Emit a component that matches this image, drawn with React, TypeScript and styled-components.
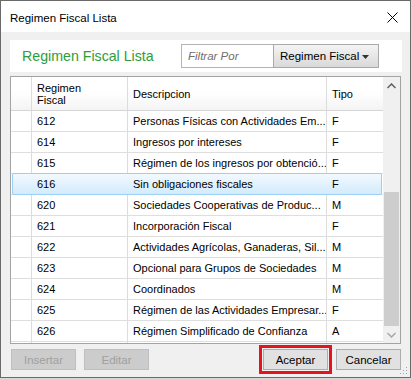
import styled, { createGlobalStyle } from "styled-components";

type Regimen = {
    clave: string;
    descripcion: string;
    tipo: string;
};

const regimenes: Regimen[] = [
    { clave: "612", descripcion: "Personas Físicas con Actividades Em...", tipo: "F" },
    { clave: "614", descripcion: "Ingresos por intereses", tipo: "F" },
    { clave: "615", descripcion: "Régimen de los ingresos por obtenció...", tipo: "F" },
    { clave: "616", descripcion: "Sin obligaciones fiscales", tipo: "F" },
    { clave: "620", descripcion: "Sociedades Cooperativas de Produc...", tipo: "M" },
    { clave: "621", descripcion: "Incorporación Fiscal", tipo: "F" },
    { clave: "622", descripcion: "Actividades Agrícolas, Ganaderas, Sil...", tipo: "M" },
    { clave: "623", descripcion: "Opcional para Grupos de Sociedades", tipo: "M" },
    { clave: "624", descripcion: "Coordinados", tipo: "M" },
    { clave: "625", descripcion: "Régimen de las Actividades Empresar...", tipo: "F" },
    { clave: "626", descripcion: "Régimen Simplificado de Confianza", tipo: "A" },
    { clave: "", descripcion: "", tipo: "" },
];

const SELECTED = "616";

function App() {
    return (
        <>
            <GlobalStyle />
            <Window>
                <TitleBar>
                    <TitleText>Regimen Fiscal Lista</TitleText>
                    <CloseIcon width="11" height="11" viewBox="0 0 11 11">
                        <path d="M0.5 0.5 L10.5 10.5 M10.5 0.5 L0.5 10.5" stroke="#000" strokeWidth="1" />
                    </CloseIcon>
                </TitleBar>
                <Body>
                    <HeaderPanel>
                        <PanelTitle>Regimen Fiscal Lista</PanelTitle>
                        <FilterInput placeholder="Filtrar Por" />
                        <Dropdown>
                            <span>Regimen Fiscal</span>
                            <DropArrow width="7" height="4" viewBox="0 0 7 4">
                                <path d="M0 0 L7 0 L3.5 4 Z" fill="#333" />
                            </DropArrow>
                        </Dropdown>
                    </HeaderPanel>
                    <Grid>
                        <Table>
                            <HeaderRow>
                                <RowHeaderCell />
                                <HeaderCell>Regimen<br />Fiscal</HeaderCell>
                                <HeaderCell>Descripcion</HeaderCell>
                                <HeaderCell $last>Tipo</HeaderCell>
                            </HeaderRow>
                            {regimenes.map((r, i) => (
                                <Row key={i} $selected={r.clave === SELECTED}>
                                    <RowHeaderCell />
                                    <Cell>{r.clave}</Cell>
                                    <Cell>{r.descripcion}</Cell>
                                    <Cell $last>{r.tipo}</Cell>
                                </Row>
                            ))}
                        </Table>
                        <ScrollBar>
                            <ScrollButton>
                                <svg width="9" height="6" viewBox="0 0 9 6">
                                    <path d="M0.5 5 L4.5 1 L8.5 5" stroke="#606060" strokeWidth="1.5" fill="none" />
                                </svg>
                            </ScrollButton>
                            <Track>
                                <Thumb />
                            </Track>
                            <ScrollButton>
                                <svg width="9" height="6" viewBox="0 0 9 6">
                                    <path d="M0.5 1 L4.5 5 L8.5 1" stroke="#a8a8a8" strokeWidth="1.5" fill="none" />
                                </svg>
                            </ScrollButton>
                        </ScrollBar>
                    </Grid>
                    <ButtonBar>
                        <ButtonGroup>
                            <DialogButton disabled>Insertar</DialogButton>
                            <DialogButton disabled>Editar</DialogButton>
                        </ButtonGroup>
                        <ButtonGroup>
                            <DialogButton $marked>Aceptar</DialogButton>
                            <DialogButton>Cancelar</DialogButton>
                        </ButtonGroup>
                    </ButtonBar>
                </Body>
                <Grip width="8" height="8" viewBox="0 0 8 8">
                    <rect x="6" y="0" width="1" height="1" fill="#a0a0a0" />
                    <rect x="3" y="3" width="1" height="1" fill="#a0a0a0" />
                    <rect x="6" y="3" width="1" height="1" fill="#a0a0a0" />
                    <rect x="0" y="6" width="1" height="1" fill="#a0a0a0" />
                    <rect x="3" y="6" width="1" height="1" fill="#a0a0a0" />
                    <rect x="6" y="6" width="1" height="1" fill="#a0a0a0" />
                </Grip>
            </Window>
        </>
    );
}

const GlobalStyle = createGlobalStyle`
    html, body {
        margin: 0;
        padding: 0;
        background: #d8d8d8;
    }
    body {
        font-family: "Liberation Sans", Arial, sans-serif;
        color: #000;
    }
`;

const Window = styled.div`
    position: relative;
    width: 409px;
    height: 376px;
    border: 1px solid #6a6a6a;
    background: #f0f0f0;
    display: flex;
    flex-direction: column;
`;

const TitleBar = styled.div`
    height: 31px;
    background: #fff;
    display: flex;
    align-items: center;
    justify-content: space-between;
    padding: 0 12px 0 9px;
`;

const TitleText = styled.div`
    font-size: 11.5px;
    padding-top: 2px;
`;

const CloseIcon = styled.svg`
    margin-top: 2px;
`;

const Body = styled.div`
    flex: 1;
    display: flex;
    flex-direction: column;
    padding: 8px 8px 0 9px;
`;

const HeaderPanel = styled.div`
    width: 392px;
    height: 32px;
    background: #fff;
    display: flex;
    align-items: center;
    padding: 0 23px 0 12px;
    box-sizing: border-box;
`;

const PanelTitle = styled.div`
    font-size: 14.2px;
    color: #2e9d3a;
    margin-right: auto;
`;

const FilterInput = styled.input`
    width: 92px;
    height: 24px;
    box-sizing: border-box;
    border: 1px solid #b4b4b4;
    border-right: none;
    padding: 0 6px;
    font-family: inherit;
    font-size: 11.5px;
    font-style: italic;
    outline: none;
    &::placeholder {
        color: #6e6e6e;
    }
`;

const Dropdown = styled.div`
    width: 106px;
    height: 24px;
    box-sizing: border-box;
    border: 1px solid #a9a9a9;
    background: linear-gradient(#f4f4f4, #d9d9d9);
    display: flex;
    align-items: center;
    justify-content: space-between;
    padding: 0 9px 0 6px;
    font-size: 11.5px;
`;

const DropArrow = styled.svg`
    margin-top: 1px;
`;

const Grid = styled.div`
    margin-top: 4px;
    width: 389px;
    height: 266px;
    border: 1px solid #a3a3a3;
    background: #fff;
    display: flex;
    overflow: hidden;
`;

const Table = styled.div`
    flex: 1;
    display: flex;
    flex-direction: column;
    overflow: hidden;
`;

const HeaderRow = styled.div`
    display: grid;
    grid-template-columns: 21px 96px 199px 55px;
    height: 34px;
    flex-shrink: 0;
    box-sizing: border-box;
    border-bottom: 1px solid #d5d5d5;
    background: linear-gradient(#ffffff 0%, #ffffff 45%, #f4f4f4 100%);
`;

const HeaderCell = styled.div<{ $last?: boolean }>`
    display: flex;
    align-items: center;
    padding-left: 5px;
    font-size: 11px;
    line-height: 12px;
    border-right: ${(p) => (p.$last ? "none" : "1px solid #dcdcdc")};
`;

const Row = styled.div<{ $selected?: boolean }>`
    position: relative;
    display: grid;
    grid-template-columns: 21px 96px 199px 55px;
    height: 21px;
    flex-shrink: 0;
    box-sizing: border-box;
    border-bottom: 1px solid #dedede;
    & > div {
        border-right-color: ${(p) => (p.$selected ? "transparent" : "#dcdcdc")};
    }
    &::before {
        content: "";
        display: ${(p) => (p.$selected ? "block" : "none")};
        position: absolute;
        left: 1px;
        right: 1px;
        top: -1px;
        bottom: -1px;
        border: 1px solid #9ccff3;
        border-radius: 2px;
        background: linear-gradient(#f2f9fe, #d3ebfc);
    }
`;

const RowHeaderCell = styled.div`
    position: relative;
    border-right: 1px solid #dcdcdc;
`;

const Cell = styled.div<{ $last?: boolean }>`
    position: relative;
    display: flex;
    align-items: center;
    padding-left: 5px;
    font-size: 11px;
    white-space: nowrap;
    overflow: hidden;
    border-right: ${(p) => (p.$last ? "none" : "1px solid #dcdcdc")};
`;

const ScrollBar = styled.div`
    width: 17px;
    background: #f0f0f0;
    display: flex;
    flex-direction: column;
`;

const ScrollButton = styled.div`
    height: 17px;
    display: flex;
    align-items: center;
    justify-content: center;
`;

const Track = styled.div`
    flex: 1;
    display: flex;
    flex-direction: column;
    justify-content: flex-end;
`;

const Thumb = styled.div`
    height: 134px;
    margin: 0 1px;
    background: #cdcdcd;
`;

const ButtonBar = styled.div`
    margin-top: 5px;
    display: flex;
    justify-content: space-between;
    padding: 0 1px 0 1px;
`;

const ButtonGroup = styled.div`
    display: flex;
    gap: 8px;
`;

const DialogButton = styled.button<{ $marked?: boolean }>`
    width: 65px;
    height: 21px;
    box-sizing: border-box;
    padding: 0;
    font-family: inherit;
    font-size: 11.5px;
    color: #000;
    background: #e1e1e1;
    border: 1px solid #adadad;
    outline: ${(p) => (p.$marked ? "3px solid #e3141f" : "none")};
    outline-offset: 1px;
    &:disabled {
        color: #a0a0a0;
        background: #cccccc;
        border-color: #bfbfbf;
    }
`;

const Grip = styled.svg`
    position: absolute;
    right: 2px;
    bottom: 2px;
`;

export default App;
